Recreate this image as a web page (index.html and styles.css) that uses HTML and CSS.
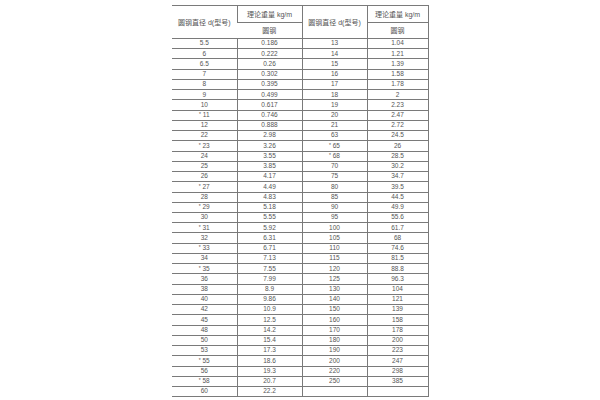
FILE: index.html
```html
<!DOCTYPE html>
<html lang="zh">
<head>
<meta charset="utf-8">
<link rel="stylesheet" href="styles.css">
<title>圆钢理论重量</title>
</head>
<body>
<table class="weights">
  <colgroup>
    <col class="c1"><col class="c2"><col class="c3"><col class="c4">
  </colgroup>
  <thead>
    <tr class="h1">
      <th rowspan="2">圆钢直径 d(型号)</th>
      <th>理论重量 kg/m</th>
      <th rowspan="2">圆钢直径 d(型号)</th>
      <th>理论重量 kg/m</th>
    </tr>
    <tr class="h2">
      <th>圆钢</th>
      <th>圆钢</th>
    </tr>
  </thead>
  <tbody>
    <tr><td>5.5</td><td>0.186</td><td>13</td><td>1.04</td></tr>
    <tr><td>6</td><td>0.222</td><td>14</td><td>1.21</td></tr>
    <tr><td>6.5</td><td>0.26</td><td>15</td><td>1.39</td></tr>
    <tr><td>7</td><td>0.302</td><td>16</td><td>1.58</td></tr>
    <tr><td>8</td><td>0.395</td><td>17</td><td>1.78</td></tr>
    <tr><td>9</td><td>0.499</td><td>18</td><td>2</td></tr>
    <tr><td>10</td><td>0.617</td><td>19</td><td>2.23</td></tr>
    <tr><td><span class="star">*</span> 11</td><td>0.746</td><td>20</td><td>2.47</td></tr>
    <tr><td>12</td><td>0.888</td><td>21</td><td>2.72</td></tr>
    <tr><td>22</td><td>2.98</td><td>63</td><td>24.5</td></tr>
    <tr><td><span class="star">*</span> 23</td><td>3.26</td><td><span class="star">*</span> 65</td><td>26</td></tr>
    <tr><td>24</td><td>3.55</td><td><span class="star">*</span> 68</td><td>28.5</td></tr>
    <tr><td>25</td><td>3.85</td><td>70</td><td>30.2</td></tr>
    <tr><td>26</td><td>4.17</td><td>75</td><td>34.7</td></tr>
    <tr><td><span class="star">*</span> 27</td><td>4.49</td><td>80</td><td>39.5</td></tr>
    <tr><td>28</td><td>4.83</td><td>85</td><td>44.5</td></tr>
    <tr><td><span class="star">*</span> 29</td><td>5.18</td><td>90</td><td>49.9</td></tr>
    <tr><td>30</td><td>5.55</td><td>95</td><td>55.6</td></tr>
    <tr><td><span class="star">*</span> 31</td><td>5.92</td><td>100</td><td>61.7</td></tr>
    <tr><td>32</td><td>6.31</td><td>105</td><td>68</td></tr>
    <tr><td><span class="star">*</span> 33</td><td>6.71</td><td>110</td><td>74.6</td></tr>
    <tr><td>34</td><td>7.13</td><td>115</td><td>81.5</td></tr>
    <tr><td><span class="star">*</span> 35</td><td>7.55</td><td>120</td><td>88.8</td></tr>
    <tr><td>36</td><td>7.99</td><td>125</td><td>96.3</td></tr>
    <tr><td>38</td><td>8.9</td><td>130</td><td>104</td></tr>
    <tr><td>40</td><td>9.86</td><td>140</td><td>121</td></tr>
    <tr><td>42</td><td>10.9</td><td>150</td><td>139</td></tr>
    <tr><td>45</td><td>12.5</td><td>160</td><td>158</td></tr>
    <tr><td>48</td><td>14.2</td><td>170</td><td>178</td></tr>
    <tr><td>50</td><td>15.4</td><td>180</td><td>200</td></tr>
    <tr><td>53</td><td>17.3</td><td>190</td><td>223</td></tr>
    <tr><td><span class="star">*</span> 55</td><td>18.6</td><td>200</td><td>247</td></tr>
    <tr><td>56</td><td>19.3</td><td>220</td><td>298</td></tr>
    <tr><td><span class="star">*</span> 58</td><td>20.7</td><td>250</td><td>385</td></tr>
    <tr><td>60</td><td>22.2</td><td></td><td></td></tr>
  </tbody>
</table>
</body>
</html>
```

FILE: styles.css
```css
html, body {
  margin: 0;
  padding: 0;
  background: #ffffff;
}

body {
  padding-top: 5px;
}

.weights {
  margin: 0 0 0 172px;
  width: 256px;
  border-collapse: collapse;
  table-layout: fixed;
  font-family: "Liberation Sans", "Noto Sans CJK SC", sans-serif;
  font-size: 6.5px;
  color: #555555;
}

.c1 { width: 65px; }
.c2 { width: 65px; }
.c3 { width: 65px; }
.c4 { width: 61px; }

.weights th,
.weights td {
  padding: 0;
  text-align: center;
  vertical-align: middle;
  font-weight: normal;
  line-height: 1;
  border-top: 1px solid #7a7a7a;
  border-bottom: 1px solid #7a7a7a;
  border-left: 1px solid #7a7a7a;
  white-space: nowrap;
  overflow: hidden;
}

.weights th {
  font-size: 7px;
}

.weights th:first-child,
.weights td:first-child {
  border-left: none;
}

.weights tr > :last-child {
  border-right: 1px solid #7a7a7a;
}

.weights .h1 { height: 17px; }
.weights .h2 { height: 16px; }
.weights tbody tr { height: 10.24px; }

.star {
  font-size: 5px;
  vertical-align: 1px;
}
```
